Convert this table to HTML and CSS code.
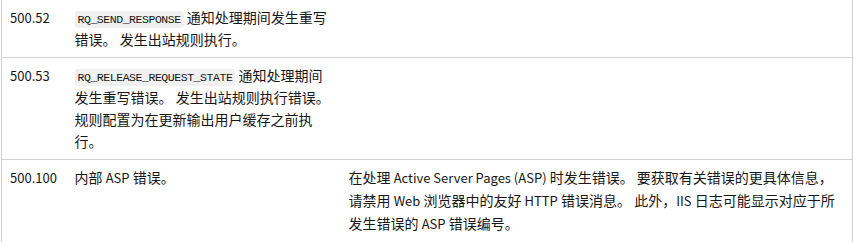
FILE: index.html
```html
<!DOCTYPE html>
<html lang="zh-CN">
<head>
<meta charset="utf-8">
<link rel="stylesheet" href="styles.css">
</head>
<body>
<table class="codes">
  <colgroup>
    <col class="c1">
    <col class="c2">
    <col class="c3">
  </colgroup>
  <tbody>
    <tr>
      <td><span class="en">500.52</span></td>
      <td><code>RQ_SEND_RESPONSE</code> 通知处理期间发生重写错误。 发生出站规则执行。</td>
      <td></td>
    </tr>
    <tr>
      <td><span class="en">500.53</span></td>
      <td><code>RQ_RELEASE_REQUEST_STATE</code> 通知处理期间发生重写错误。 发生出站规则执行错误。 规则配置为在更新输出用户缓存之前执行。</td>
      <td></td>
    </tr>
    <tr>
      <td><span class="en">500.100</span></td>
      <td>内部 <span class="en">ASP</span> 错误。</td>
      <td>在处理 <span class="en">Active Server Pages (ASP)</span> 时发生错误。 要获取有关错误的更具体信息，请禁用 <span class="en">Web</span> 浏览器中的友好 <span class="en">HTTP</span> 错误消息。 此外，<span class="en">IIS</span> 日志可能显示对应于所发生错误的 <span class="en">ASP</span> 错误编号。</td>
    </tr>
  </tbody>
</table>
</body>
</html>
```
FILE: styles.css
```css
html, body {
  margin: 0;
  padding: 0;
  background: #ffffff;
}
body {
  padding-left: 1px;
  font-family: "Noto Sans CJK SC", "Noto Sans", sans-serif;
  font-size: 14px;
  line-height: 22px;
  color: #161616;
}
.codes {
  width: 852px;
  border-collapse: collapse;
  table-layout: fixed;
  border-left: 1px solid #d1d1d1;
  border-right: 1px solid #d1d1d1;
}
.c1 { width: 65px; }
.c2 { width: 274px; }
.codes td {
  vertical-align: top;
  padding: 6px 8px 7px 8px;
  border-bottom: 1px solid #d1d1d1;
  word-break: break-all;
}
.en {
  font-size: 13px;
  white-space: nowrap;
}
.codes code {
  font-family: "Liberation Mono", "DejaVu Sans Mono", monospace;
  font-size: 11.5px;
  letter-spacing: -0.45px;
  line-height: 14px;
  background: #f0f0f0;
  padding: 2px 3px;
  border-radius: 3px;
  color: #161616;
}
```
